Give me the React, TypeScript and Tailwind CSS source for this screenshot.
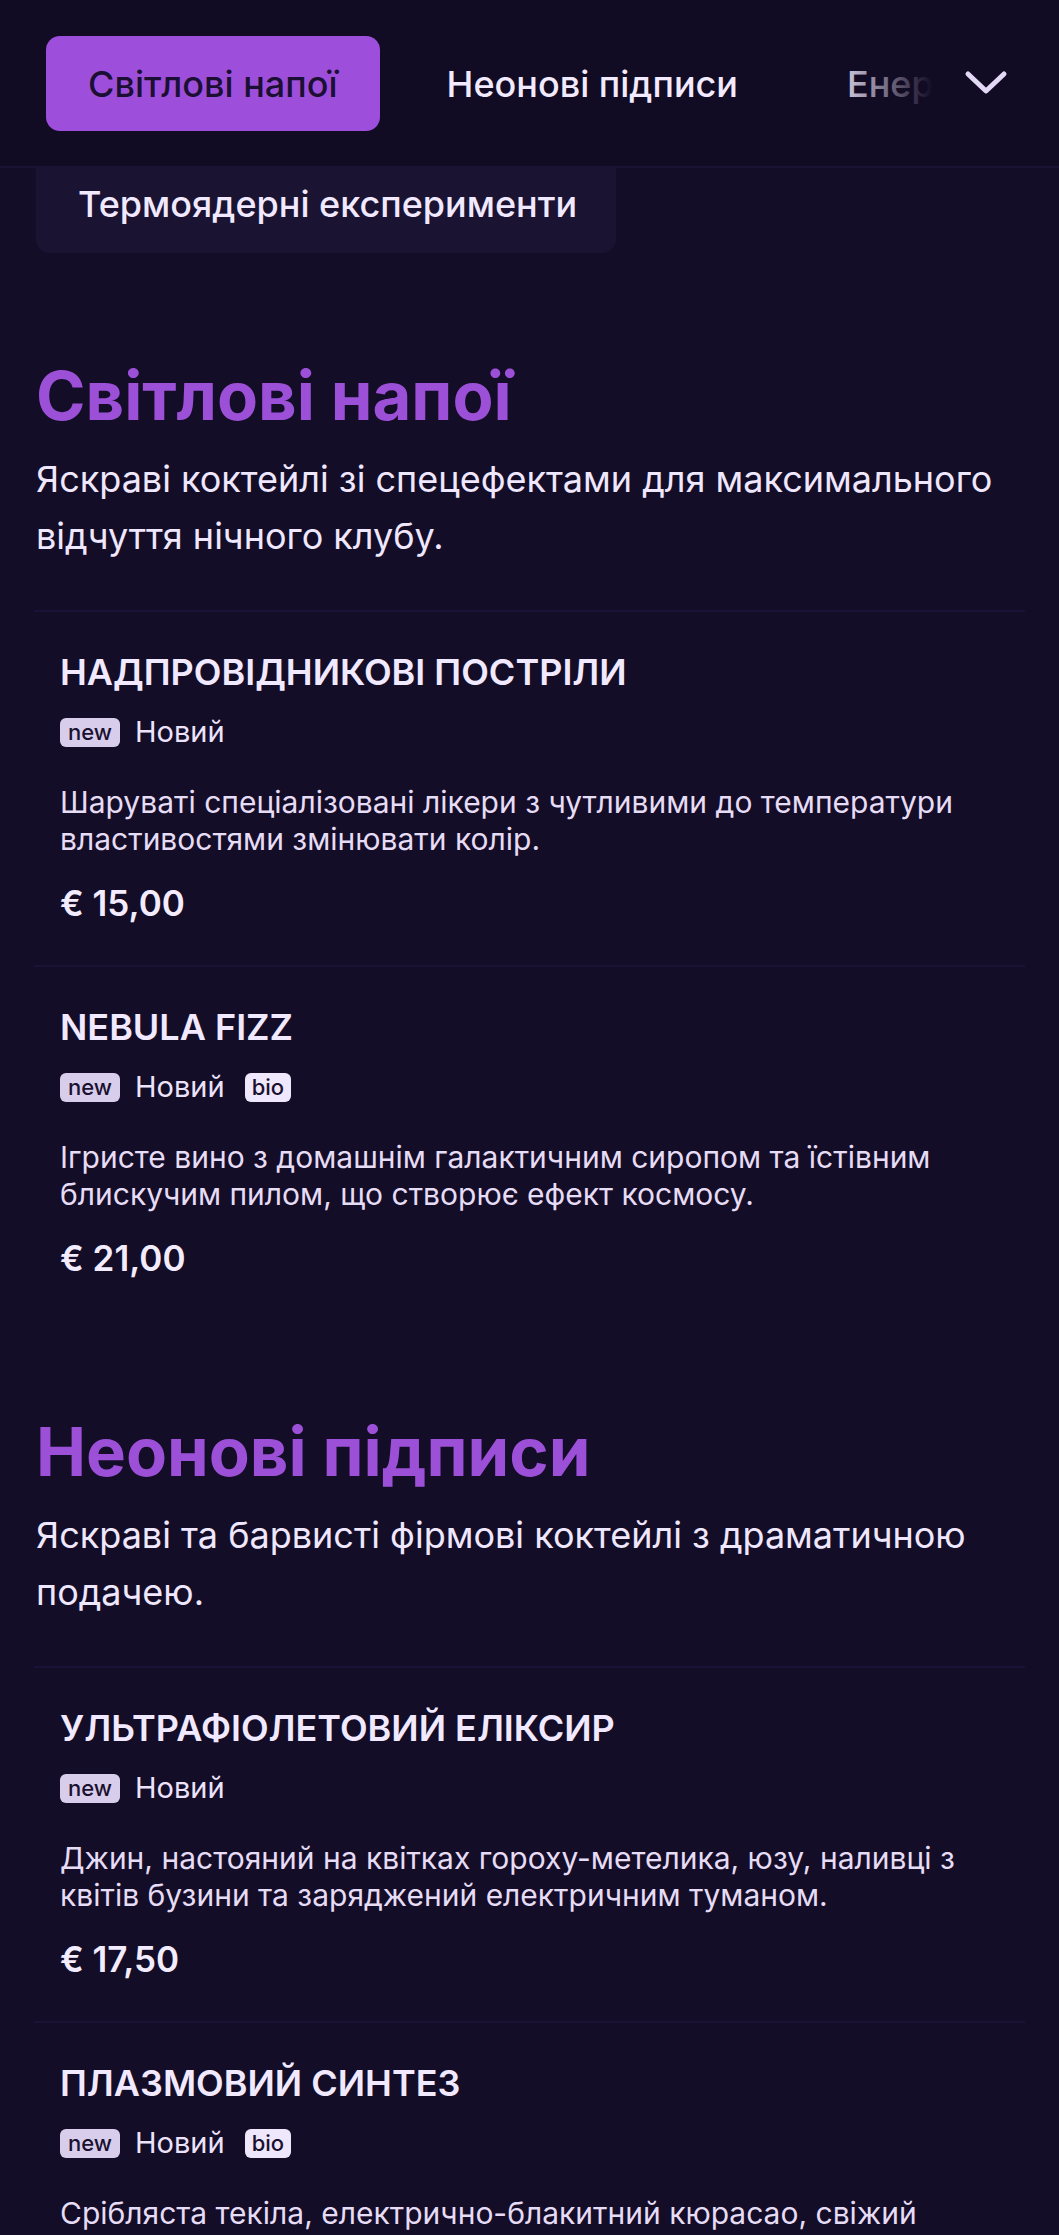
import * as React from 'react';

interface MenuItem {
    name: string;
    isNew?: boolean;
    bio?: boolean;
    description: string;
    price: string;
}

interface MenuSection {
    title: string;
    description: string;
    items: MenuItem[];
}

const TABS = ['Світлові напої', 'Неонові підписи', 'Енергетичні бомби'];

const SECTIONS: MenuSection[] = [
    {
        title: 'Світлові напої',
        description: 'Яскраві коктейлі зі спецефектами для максимального відчуття нічного клубу.',
        items: [
            {
                name: 'Надпровідникові постріли',
                isNew: true,
                description: 'Шаруваті спеціалізовані лікери з чутливими до температури властивостями змінювати колір.',
                price: '€ 15,00',
            },
            {
                name: 'Nebula Fizz',
                isNew: true,
                bio: true,
                description: 'Ігристе вино з домашнім галактичним сиропом та їстівним блискучим пилом, що створює ефект космосу.',
                price: '€ 21,00',
            },
        ],
    },
    {
        title: 'Неонові підписи',
        description: 'Яскраві та барвисті фірмові коктейлі з драматичною подачею.',
        items: [
            {
                name: 'Ультрафіолетовий еліксир',
                isNew: true,
                description: 'Джин, настояний на квітках гороху-метелика, юзу, наливці з квітів бузини та заряджений електричним туманом.',
                price: '€ 17,50',
            },
            {
                name: 'Плазмовий синтез',
                isNew: true,
                bio: true,
                description: 'Срібляста текіла, електрично-блакитний кюрасао, свіжий лаймовий сік та мерехтливий іскристий тонік.',
                price: '€ 19,00',
            },
        ],
    },
];

const Chevron = () => (
    <svg width="44" height="26" viewBox="0 0 44 26" fill="none">
        <polyline points="4,4 22,21 40,4" stroke="#e3d9f6" strokeWidth="5" strokeLinecap="round" strokeLinejoin="round" />
    </svg>
);

const Item: React.FC<{ item: MenuItem }> = ({ item }) => (
    <div className="border-t-2 border-[#1b1335] px-[26px] pt-[40px] pb-[40px]">
        <h3 className="text-[36px] leading-[40px] font-semibold uppercase text-[#f1e9ff]">{item.name}</h3>
        <div className="mt-[22px] flex h-[36px] items-center">
            {item.isNew && (
                <>
                    <span className="rounded-[6px] bg-[#d9cdec] px-[8px] text-[22px] leading-[29px] font-medium text-[#1a1130]">new</span>
                    <span className="ml-[15px] text-[29px] text-[#ece3fb]">Новий</span>
                </>
            )}
            {item.bio && (
                <span className="ml-[20px] rounded-[6px] bg-[#efe7fc] px-[7px] text-[22px] leading-[29px] font-medium text-[#1a1130]">bio</span>
            )}
        </div>
        <p className="mt-[34px] text-[30px] leading-[37px] text-[#e6dcf5]">{item.description}</p>
        <p className="mt-[23px] text-[35px] leading-[44px] font-semibold text-[#f3ecff]">{item.price}</p>
    </div>
);

const Section: React.FC<{ section: MenuSection; first?: boolean }> = ({ section, first }) => (
    <section className={first ? 'mt-[106px]' : 'mt-[95px]'}>
        <h2 className="text-[67px] leading-[74px] font-bold text-[#9c50d8]">{section.title}</h2>
        <p className="mt-[18px] text-[36px] leading-[57px] text-[#efe7fd]">{section.description}</p>
        <div className="mt-[45px] -mx-[2px]">
            {section.items.map((item) => (
                <Item key={item.name} item={item} />
            ))}
        </div>
    </section>
);

export default function App() {
    return (
        <div className="min-h-screen bg-[#140d27] font-['Inter','Noto_Sans',sans-serif] antialiased">
            <header className="relative h-[168px] overflow-hidden border-b-2 border-[#1b1334] bg-[#120b24]">
                <div className="flex items-center gap-[25px] pl-[46px] pt-[36px] whitespace-nowrap">
                    {TABS.map((tab, i) => (
                        <div
                            key={tab}
                            className={`flex h-[95px] shrink-0 items-center rounded-[14px] px-[42px] text-[36px] font-medium ${
                                i === 0 ? 'bg-[#9d4fdc] text-[#1b0f33]' : 'text-[#f2eaff]'
                            }`}
                        >
                            {tab}
                        </div>
                    ))}
                </div>
                <div className="absolute right-0 top-0 flex h-full w-[230px] items-center justify-end bg-linear-to-r from-transparent via-[#120b24] via-45% to-[#120b24] pr-[51px]">
                    <Chevron />
                </div>
            </header>

            <div className="ml-[36px] flex h-[85px] w-[580px] items-center rounded-b-[14px] bg-[#1b1332] pb-[14px] pl-[42px] text-[36px] font-medium text-[#f1e9ff]">
                Термоядерні експерименти
            </div>

            <main className="px-[36px] pb-[60px]">
                {SECTIONS.map((section, i) => (
                    <Section key={section.title} section={section} first={i === 0} />
                ))}
            </main>
        </div>
    );
}
